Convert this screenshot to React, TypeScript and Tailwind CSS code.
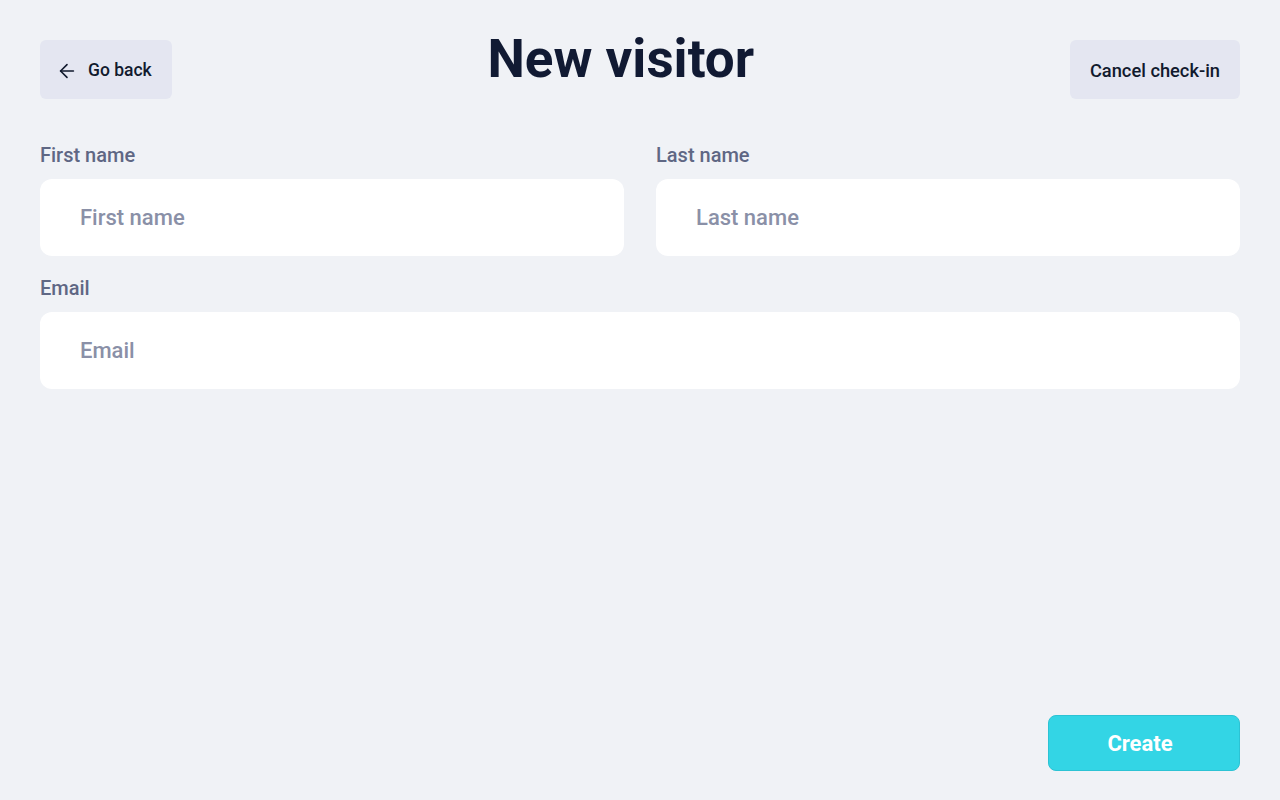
import React, { useState } from "react";
import { ArrowLeft } from "lucide-react";

function Field({
  label,
  placeholder,
  type = "text",
}: {
  label: string;
  placeholder: string;
  type?: string;
}) {
  const [value, setValue] = useState("");
  return (
    <label className="flex flex-col gap-[12px]">
      <span className="text-[20px] leading-[24px] font-medium text-[#5f6784]">{label}</span>
      <input
        type={type}
        value={value}
        onChange={(e) => setValue(e.target.value)}
        placeholder={placeholder}
        className="h-[77px] w-full rounded-xl bg-white px-10 text-[22px] font-medium text-[#111a33] outline-none placeholder:text-[#8a90a7]"
      />
    </label>
  );
}

export default function App() {
  return (
    <div
      className="flex min-h-[800px] flex-col bg-[#f0f2f6] px-10 pt-10 pb-[29px]"
      style={{ fontFamily: "Roboto, 'Liberation Sans', sans-serif" }}
    >
      <header className="flex items-start justify-between">
        <button className="flex h-[59px] items-center gap-[10px] rounded-md bg-[#e4e6f1] pt-[2px] pr-5 pl-4 text-[17.5px] font-medium text-[#111a2e]">
          <ArrowLeft size={22} strokeWidth={1.75} />
          Go back
        </button>
        <h1 className="-mt-[7px] text-[53px] leading-[53px] font-bold text-[#111a33]">New visitor</h1>
        <button className="flex h-[59px] items-center rounded-md bg-[#e4e6f1] px-5 pt-[2px] text-[18.3px] font-medium text-[#111a2e]">
          Cancel check-in
        </button>
      </header>

      <form className="mt-[44px] flex flex-col gap-[20px]" onSubmit={(e) => e.preventDefault()}>
        <div className="grid grid-cols-2 gap-8">
          <Field label="First name" placeholder="First name" />
          <Field label="Last name" placeholder="Last name" />
        </div>
        <Field label="Email" placeholder="Email" type="email" />
      </form>

      <div className="mt-auto flex justify-end">
        <button className="h-[56px] w-[192px] rounded-lg border border-[#2cc3d4] bg-[#33d5e5] pr-2 text-[22px] font-bold text-white">
          Create
        </button>
      </div>
    </div>
  );
}
